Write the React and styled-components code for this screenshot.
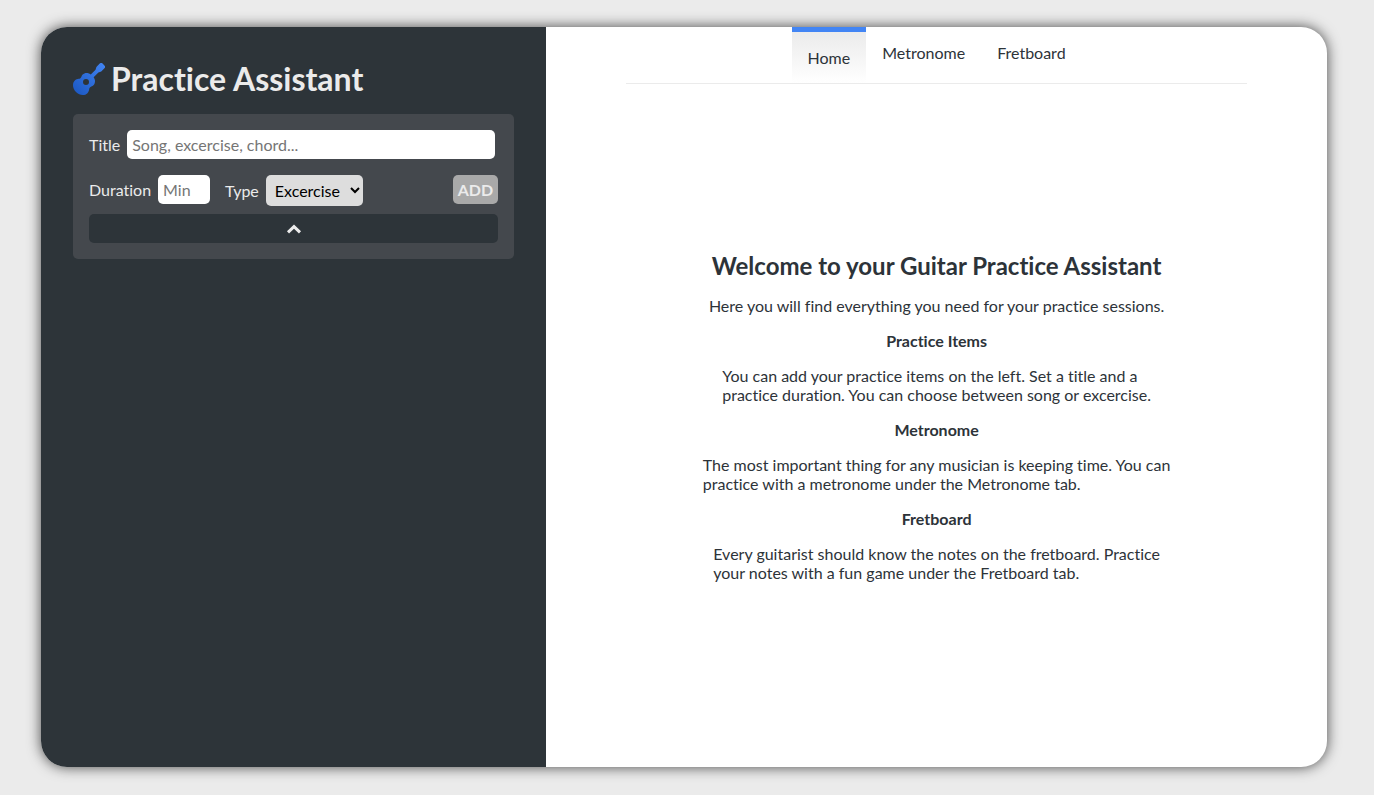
import React from "react";
import styled, { createGlobalStyle } from "styled-components";
import { FaGuitar } from "react-icons/fa";

const GlobalStyle = createGlobalStyle`
  *, *::before, *::after { box-sizing: border-box; }
  body {
    margin: 0;
    background: #ebebeb;
    color: #2d3339;
    font-family: Lato, "Liberation Sans", sans-serif;
    font-size: 16px;
    line-height: 19px;
    font-variant-ligatures: none;
  }
  button, input, select { font: inherit; margin: 0; }
`;

const Page = styled.div`
  display: flex;
  min-height: 100vh;
  padding: 27px 47px 28px 41px;
`;

const Card = styled.div`
  flex: 1;
  display: grid;
  grid-template-columns: 11fr 17fr;
  border-radius: 26px;
  overflow: hidden;
  background: #ffffff;
  box-shadow: 0 0 14px rgba(0, 0, 0, 0.7);
`;

const Sidebar = styled.aside`
  padding: 32px;
  background: #2d3439;
  color: #ebebeb;
`;

const Brand = styled.h1`
  display: flex;
  align-items: center;
  gap: 6px;
  margin: 0 0 15px;
  font-size: 32px;
  line-height: 40px;
  font-weight: 700;

  svg { flex: none; }
`;

const Gradient = styled.svg`
  position: absolute;
`;

const ItemForm = styled.form`
  display: flex;
  flex-direction: column;
  padding: 16px;
  border-radius: 5px;
  background: #44484d;
`;

const Row = styled.div`
  display: flex;
  align-items: flex-start;
  gap: 15px;
  margin-bottom: ${(p) => (p.$tight ? 8 : 16)}px;
`;

const Field = styled.div`
  display: flex;
  align-items: center;
  gap: 7px;
  flex: ${(p) => (p.$grow ? "1" : "none")};
  padding-right: ${(p) => (p.$grow ? 3 : 0)}px;
`;

const TextInput = styled.input`
  flex: ${(p) => (p.$short ? "none" : "1")};
  min-width: 0;
  width: ${(p) => (p.$short ? "52px" : "auto")};
  height: 29px;
  padding: 5px;
  border: 0;
  border-radius: 5px;
  background: #ffffff;

  &::placeholder { color: #757575; }
`;

const TypeSelect = styled.select`
  width: 97px;
  height: 31px;
  padding: 5px;
  border: 0;
  border-radius: 5px;
  background: #dddddd;
  color: #000000;
`;

const AddButton = styled.button`
  height: 29px;
  margin-left: auto;
  padding: 5px;
  border: 0;
  border-radius: 5px;
  background: #a9a9a9;
  color: #ebebeb;
  font-weight: 700;
`;

const ToggleButton = styled.button`
  display: flex;
  align-items: center;
  justify-content: center;
  height: 29px;
  border: 0;
  border-radius: 5px;
  background: #2d3439;
  color: #ebebeb;
`;

const Main = styled.main`
  display: flex;
  flex-direction: column;
  padding: 0 80px 18px;
`;

const Tabs = styled.nav`
  display: flex;
  justify-content: center;
  align-items: flex-start;
  border-bottom: 1px solid #ebebeb;
`;

const Tab = styled.a`
  padding: 16px;
  border-top: ${(p) => (p.$active ? "5px solid #4285f4" : "0")};
  background: ${(p) => (p.$active ? "linear-gradient(#ebebeb, #ffffff)" : "none")};
  color: inherit;
  text-decoration: none;
`;

const Welcome = styled.section`
  flex: 1;
  display: flex;
  flex-direction: column;
  align-items: center;
  justify-content: center;
  gap: 16px;
`;

const Heading = styled.h2`
  margin: 0;
  font-size: 24px;
  line-height: 29px;
`;

const Topic = styled.h3`
  margin: 0;
  font-size: 16px;
  line-height: 19px;
`;

const Text = styled.p`
  margin: 0;
`;

const topics = [
  {
    name: "Practice Items",
    lines: [
      "You can add your practice items on the left. Set a title and a",
      "practice duration. You can choose between song or excercise.",
    ],
  },
  {
    name: "Metronome",
    lines: [
      "The most important thing for any musician is keeping time. You can",
      "practice with a metronome under the Metronome tab.",
    ],
  },
  {
    name: "Fretboard",
    lines: [
      "Every guitarist should know the notes on the fretboard. Practice",
      "your notes with a fun game under the Fretboard tab.",
    ],
  },
];

export default function App() {
  return (
    <Page>
      <GlobalStyle />
      <Gradient width="0" height="0" aria-hidden="true">
        <linearGradient id="guitar-blue" x1="1" y1="0" x2="0" y2="1">
          <stop offset="0" stopColor="#4285f4" />
          <stop offset="1" stopColor="#1a56c0" />
        </linearGradient>
      </Gradient>
      <Card>
        <Sidebar>
          <Brand>
            <FaGuitar size={32} fill="url(#guitar-blue)" aria-hidden="true" />
            Practice Assistant
          </Brand>
          <ItemForm onSubmit={(e) => e.preventDefault()}>
            <Row>
              <Field $grow>
                <label htmlFor="title">Title</label>
                <TextInput id="title" type="text" placeholder="Song, excercise, chord..." />
              </Field>
            </Row>
            <Row $tight>
              <Field>
                <label htmlFor="duration">Duration</label>
                <TextInput id="duration" type="text" inputMode="numeric" placeholder="Min" $short />
              </Field>
              <Field>
                <label htmlFor="type">Type</label>
                <TypeSelect id="type" defaultValue="Excercise">
                  <option>Excercise</option>
                  <option>Song</option>
                </TypeSelect>
              </Field>
              <AddButton type="submit">ADD</AddButton>
            </Row>
            <ToggleButton type="button" aria-label="Collapse form">
              <svg width="16" height="16" viewBox="0 0 16 16" aria-hidden="true">
                <path d="M2 11.4 8 5.6 14 11.4" fill="none" stroke="currentColor" strokeWidth="3" />
              </svg>
            </ToggleButton>
          </ItemForm>
        </Sidebar>
        <Main>
          <Tabs>
            <Tab href="#home" $active>Home</Tab>
            <Tab href="#metronome">Metronome</Tab>
            <Tab href="#fretboard">Fretboard</Tab>
          </Tabs>
          <Welcome>
            <Heading>Welcome to your Guitar Practice Assistant</Heading>
            <Text>Here you will find everything you need for your practice sessions.</Text>
            {topics.map((t) => (
              <React.Fragment key={t.name}>
                <Topic>{t.name}</Topic>
                <Text>
                  {t.lines[0]}
                  <br />
                  {t.lines[1]}
                </Text>
              </React.Fragment>
            ))}
          </Welcome>
        </Main>
      </Card>
    </Page>
  );
}
